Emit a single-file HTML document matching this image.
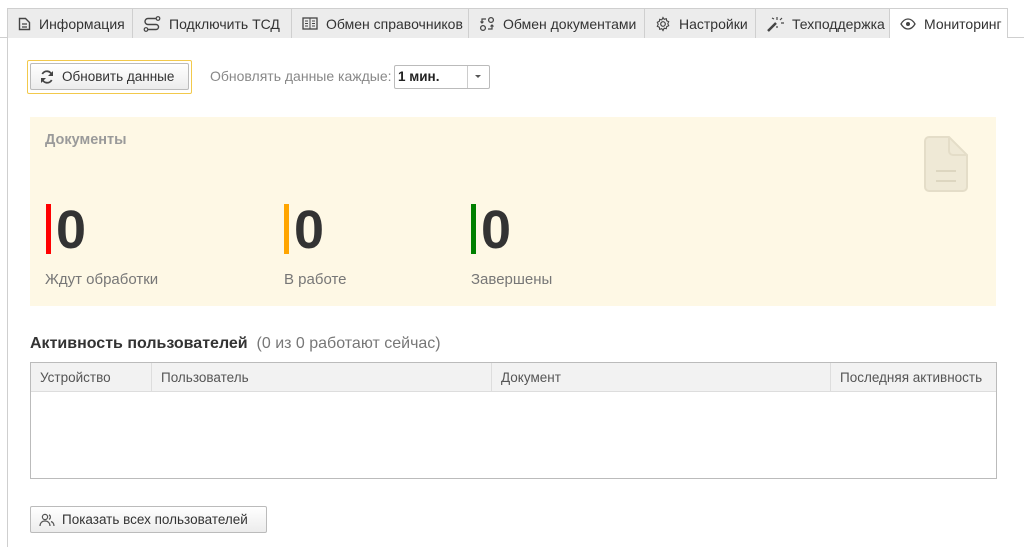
<!DOCTYPE html><html><head><meta charset="utf-8"><style>
*{margin:0;padding:0;box-sizing:border-box}
body{width:1024px;height:547px;background:#fff;font-family:"Liberation Sans",Arial,sans-serif;font-size:13px;color:#333;position:relative;overflow:hidden}
.a{position:absolute}
.tab{position:absolute;top:8px;height:30px;background:#ececec;border:1px solid #cfcfcf;border-bottom:none;border-left:none;display:flex;align-items:center;padding-left:10px;font-size:14px;color:#333;white-space:nowrap}
.tab svg{margin-right:8px}
.zero{position:absolute;top:200px;font-size:54px;font-weight:bold;color:#333;line-height:60px}
.bar{position:absolute;top:204px;width:5px;height:50px}
.lbl{position:absolute;top:271px;font-size:15px;color:#777}
.th{position:absolute;top:363px;height:29px;line-height:29px;font-size:13.5px;color:#555;padding-left:9px;border-right:1px solid #ddd}
.btn{position:absolute;border:1px solid #bbb;border-radius:2px;background:linear-gradient(#fff,#ececec);display:flex;align-items:center;font-size:13.5px;color:#333}
</style></head><body>
<div class="a" style="left:0;top:37px;width:1024px;height:1px;background:#cfcfcf"></div>
<div class="a" style="left:7px;top:37px;width:1px;height:510px;background:#cfcfcf"></div>
<div class="tab" style="left:7px;width:126px;border-left:1px solid #cfcfcf"><svg width="13" height="14" viewBox="0 0 13 14"><path d="M1.5 1.5h6l4 4v7h-10z" fill="none" stroke="#444" stroke-width="1.4"/><path d="M4 7h5M4 10h5" stroke="#444" stroke-width="1.3"/></svg>Информация</div>
<div class="tab" style="left:133px;width:159px"><svg width="18" height="16" viewBox="0 0 18 16"><circle cx="15" cy="2.5" r="1.8" fill="none" stroke="#444" stroke-width="1.2"/><circle cx="3" cy="13.5" r="1.8" fill="none" stroke="#444" stroke-width="1.2"/><path d="M13 2.5H5a3 3 0 0 0 0 6h8a2.5 2.5 0 0 1 0 5H5" fill="none" stroke="#444" stroke-width="1.4"/></svg>Подключить ТСД</div>
<div class="tab" style="left:292px;width:177px"><svg width="16" height="13" viewBox="0 0 16 13"><rect x="1" y="1" width="14" height="11" fill="none" stroke="#444" stroke-width="1.3"/><path d="M8 1v11M3 4h3M3 6.5h3M3 9h3M10 4h3M10 6.5h3M10 9h3" stroke="#444" stroke-width="1"/></svg>Обмен справочников</div>
<div class="tab" style="left:469px;width:176px"><svg width="16" height="16" viewBox="0 0 16 16"><circle cx="12" cy="4" r="2.4" fill="none" stroke="#444" stroke-width="1.3"/><circle cx="4" cy="12" r="2.4" fill="none" stroke="#444" stroke-width="1.3"/><path d="M7 3H3v4M1.5 5.5L3 7l1.5-1.5M9 13h4V9M11.5 10.5L13 9l1.5 1.5" fill="none" stroke="#444" stroke-width="1.2"/></svg>Обмен документами</div>
<div class="tab" style="left:645px;width:111px"><svg width="16" height="16" viewBox="0 0 16 16"><circle cx="8" cy="8" r="2.3" fill="none" stroke="#444" stroke-width="1.2"/><path d="M8 1.5l1.2 1.8 2.1-.6.4 2.1 2 .9-.9 2 .9 2-2 .9-.4 2.1-2.1-.6L8 14.5l-1.2-1.8-2.1.6-.4-2.1-2-.9.9-2-.9-2 2-.9.4-2.1 2.1.6z" fill="none" stroke="#444" stroke-width="1.1"/></svg>Настройки</div>
<div class="tab" style="left:756px;width:134px"><svg width="18" height="16" viewBox="0 0 18 16"><path d="M2 15l8-8" stroke="#444" stroke-width="2.5"/><path d="M11 1v3M14 4l2-2M15 7h3M11 10v2M8 3l-2-1" stroke="#444" stroke-width="1.2"/></svg>Техподдержка</div>
<div class="tab" style="left:890px;width:118px;background:#fff;height:30px;z-index:2"><svg width="16" height="12" viewBox="0 0 16 12"><path d="M1 6c2-3.5 4.5-5 7-5s5 1.5 7 5c-2 3.5-4.5 5-7 5S3 9.5 1 6z" fill="none" stroke="#444" stroke-width="1.3"/><circle cx="8" cy="6" r="2" fill="#444"/></svg>Мониторинг</div>

<div class="a" style="left:27px;top:60px;width:165px;height:34px;border:1px solid #f2c94c;border-radius:2px"></div>
<div class="btn" style="left:30px;top:63px;width:159px;height:27px;padding-left:8px"><svg width="16" height="16" viewBox="0 0 16 16" style="margin-right:7px"><path d="M13 6.5A5.2 5.2 0 0 0 3.3 5M3 9.5a5.2 5.2 0 0 0 9.7 1.5" fill="none" stroke="#444" stroke-width="1.8"/><path d="M14 2v5h-5zM2 14V9h5z" fill="#444"/></svg>Обновить данные</div>
<div class="a" style="left:210px;top:68px;color:#888;font-size:14px">Обновлять данные каждые:</div>
<div class="a" style="left:394px;top:65px;width:96px;height:24px;border:1px solid #bbb;border-radius:2px;background:#fff"></div>
<div class="a" style="left:398px;top:69px;font-weight:bold;font-size:13.5px;color:#222">1 мин.</div>
<div class="a" style="left:467px;top:66px;width:1px;height:22px;background:#ccc"></div>
<div class="a" style="left:475px;top:75px;width:0;height:0;border-left:3px solid transparent;border-right:3px solid transparent;border-top:3px solid #555"></div>

<div class="a" style="left:30px;top:117px;width:966px;height:189px;background:#fef8e5"></div>
<div class="a" style="left:45px;top:132px;font-size:14.5px;font-weight:bold;color:#9a9a9a">Документы</div>
<svg class="a" style="left:923px;top:135px" width="48" height="58" viewBox="0 0 48 58"><path d="M6 2h20l18 18v32a4 4 0 0 1-4 4H6a4 4 0 0 1-4-4V6a4 4 0 0 1 4-4z" fill="#efe9d6" stroke="#e4ddc8" stroke-width="2"/><path d="M26 2v14a4 4 0 0 0 4 4h14" fill="none" stroke="#e4ddc8" stroke-width="2"/><path d="M13 36h20M13 46h20" stroke="#ddd6c0" stroke-width="2"/></svg>
<div class="bar" style="left:46px;background:#f00"></div><div class="zero" style="left:56px">0</div><div class="lbl" style="left:45px">Ждут обработки</div>
<div class="bar" style="left:284px;background:#ffa500"></div><div class="zero" style="left:294px">0</div><div class="lbl" style="left:284px">В работе</div>
<div class="bar" style="left:471px;background:#008000"></div><div class="zero" style="left:481px">0</div><div class="lbl" style="left:471px">Завершены</div>

<div class="a" style="left:30px;top:335px;font-size:16px;font-weight:bold;color:#333">Активность пользователей <span style="font-weight:normal;color:#777;font-size:16px">&nbsp;(0 из 0 работают сейчас)</span></div>
<div class="a" style="left:30px;top:362px;width:967px;height:117px;border:1px solid #bbb;background:#fff"></div>
<div class="a" style="left:31px;top:363px;width:965px;height:29px;background:#f2f2f2;border-bottom:1px solid #ddd"></div>
<div class="th" style="left:31px;width:121px">Устройство</div>
<div class="th" style="left:152px;width:340px">Пользователь</div>
<div class="th" style="left:492px;width:339px">Документ</div>
<div class="th" style="left:831px;width:165px;border-right:none">Последняя активность</div>

<div class="btn" style="left:30px;top:506px;width:237px;height:27px;padding-left:8px"><svg width="16" height="14" viewBox="0 0 16 14" style="margin-right:7px"><circle cx="6" cy="4" r="2.6" fill="none" stroke="#555" stroke-width="1.2"/><path d="M1 13c0-3 2-5 5-5s5 2 5 5" fill="none" stroke="#555" stroke-width="1.2"/><path d="M10 1.8a2.6 2.6 0 0 1 0 4.6M12 8.5c1.8.6 3 2.3 3 4.5" fill="none" stroke="#555" stroke-width="1.2"/></svg>Показать всех пользователей</div>
</body></html>
